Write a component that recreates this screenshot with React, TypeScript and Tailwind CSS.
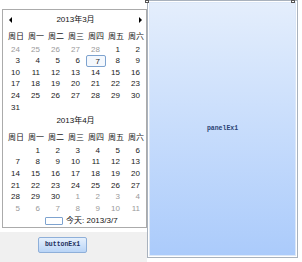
import React from "react";

type Cell = { d: number; other?: boolean };

const weekDays = ["周日", "周一", "周二", "周三", "周四", "周五", "周六"];

const range = (a: number, b: number, other = false): Cell[] =>
  Array.from({ length: b - a + 1 }, (_, i) => ({ d: a + i, other }));

const march: Cell[] = [...range(24, 28, true), ...range(1, 31)];
const april: Cell[] = [
  { d: 0 },
  ...range(1, 30),
  ...range(1, 11, true),
];

function Month({
  title,
  cells,
  arrows,
  selected,
}: {
  title: string;
  cells: Cell[];
  arrows?: boolean;
  selected?: number;
}) {
  return (
    <div className="mb-[2px]">
      {/* header */}
      <div className="h-[12px] mb-[5px] flex items-center justify-between pl-[3px] pr-[4px]">
        <span
          className={
            "w-0 h-0 border-y-[3px] border-y-transparent border-r-[3px] border-r-black " +
            (arrows ? "" : "invisible")
          }
        />
        <span className="leading-[12px] text-[#111]">{title}</span>
        <span
          className={
            "w-0 h-0 border-y-[3px] border-y-transparent border-l-[3px] border-l-black " +
            (arrows ? "" : "invisible")
          }
        />
      </div>
      <div className="grid grid-cols-7 w-[140px] h-[11.6px] mb-[1px]">
        {weekDays.map((w) => (
          <div key={w} className="text-center leading-[11.6px] text-[#222]">
            {w}
          </div>
        ))}
      </div>
      <div className="grid grid-cols-7 w-[140px] auto-rows-[11.6px]">
        {cells.map((c, i) => (
          <div
            key={i}
            className={
              "text-right leading-[11.6px] " +
              (i === selected
                ? "border border-[#7ea3cf] rounded-[2px] bg-[#f4f8fd] pr-[5px] leading-[9.6px] "
                : "pr-[6px] ") +
              (c.other ? "text-[#9a9a9a]" : "text-[#1a1a1a]")
            }
          >
            {c.d > 0 ? c.d : ""}
          </div>
        ))}
      </div>
    </div>
  );
}

export default function App() {
  return (
    <div className="relative w-[302px] h-[262px] bg-white flex text-[8px] font-['Liberation_Sans','Noto_Sans_CJK_SC',sans-serif]">
      {/* left column: calendar + button strip */}
      <div className="w-[147px] flex flex-col">
        <div className="ml-[2px] mt-[9px] w-[145px] h-[219px] border border-[#ababab] bg-white pt-[4px] pl-[3px]">
          <Month title="2013年3月" cells={march} arrows selected={11} />
          <Month title="2013年4月" cells={april} />
          <div className="h-[10px] flex items-center pl-[39px] gap-[3px]">
            <span className="w-[18px] h-[8px] border border-[#7ea3cf] rounded-[1px]" />
            <span className="text-[#111] leading-[10px]">今天: 2013/3/7</span>
          </div>
        </div>
        <div className="mt-[4px] flex-1 bg-[#f0f0f0] pt-[5px] pl-[38px]">
          <button className="w-[49px] h-[16px] border border-[#8eafd9] rounded-[2px] bg-linear-to-b from-[#e6f0fc] to-[#b9d4f6] text-[6.5px] font-bold font-['Liberation_Mono',monospace] text-[#1d2f5c] leading-[14px]">
            buttonEx1
          </button>
        </div>
      </div>

      {/* panel */}
      <div className="w-[151px] h-[258px] border border-[#a9b2bd] p-px">
        <div className="w-full h-full border border-[#dce8f8] bg-linear-to-b from-[#e4eefc] to-[#abcbfb] flex items-center justify-center">
          <span className="text-[6.5px] font-bold font-['Liberation_Mono',monospace] text-[#2a4272]">
            panelEx1
          </span>
        </div>
      </div>

      {/* designer handles */}
      <span className="absolute left-[145px] top-0 w-[4px] h-[3px] border border-[#555] bg-white" />
      <span className="absolute left-[291px] top-0 w-[4px] h-[3px] border border-[#555] bg-white" />
    </div>
  );
}
